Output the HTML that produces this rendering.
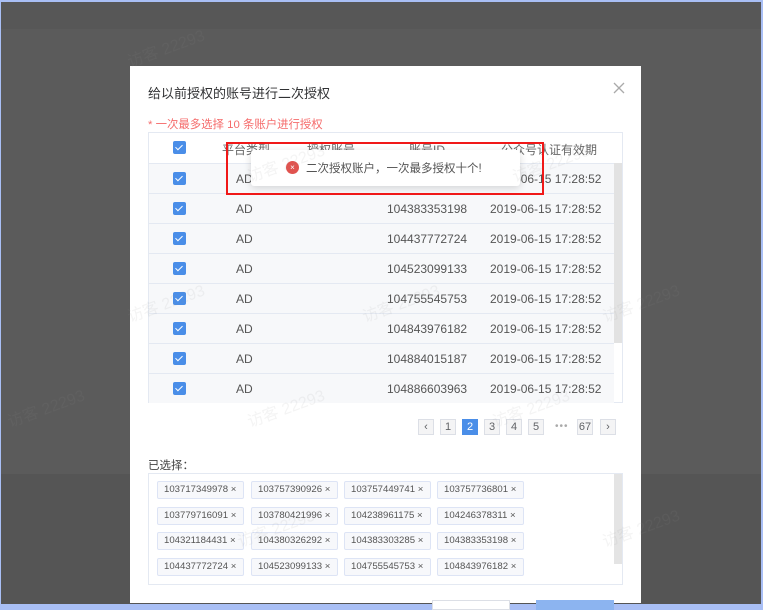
<!DOCTYPE html>
<html><head><meta charset="utf-8"><style>
*{margin:0;padding:0;box-sizing:border-box}
body{width:763px;height:606px;overflow:hidden;background:#a9bff5;font-family:"Liberation Sans","Noto Sans CJK SC",sans-serif;position:relative}
.bg{position:absolute;left:1px;top:2px;width:760px;height:601px;background:#5b5b5b}
.bg .t{position:absolute;left:0;top:0;width:100%;height:27px;background:#575757}
.bg .b{position:absolute;left:0;top:472px;width:100%;height:130px;background:#555}
.m{position:absolute;left:130px;top:66px;width:511px;height:537px;background:#fff}
.a{position:absolute;white-space:nowrap}
.title{left:18px;top:17px;font-size:13px;color:#303133}
.note{left:18px;top:50px;font-size:11.4px;color:#f56c6c}
.tbl{left:18px;top:66px;width:475px;height:271px;border:1px solid #e4e9f2;background:#fff}
.row{position:absolute;left:0;width:465px;height:30px;border-top:1px solid #e4e9f2;background:#f7f8fa;font-size:12px;color:#555}
.cb{position:absolute;left:24px;top:8px;width:13px;height:13px;background:#4a8ee8;border-radius:2px}
.cb:after{content:"";position:absolute;left:4px;top:2px;width:3px;height:6px;border:solid #fff;border-width:0 1.6px 1.6px 0;transform:rotate(45deg)}
.sb{position:absolute;left:465px;top:30px;width:8px;height:180px;background:#e2e2e2}
.pg{position:absolute;top:353px;height:16px;width:16px;border:1px solid #dcdfe6;background:#f4f4f5;font-size:11px;color:#606266;text-align:center;line-height:14px}
.tag{position:absolute;height:18px;width:87px;border:1px solid #dde4f5;background:#f7f8fb;font-size:9.6px;color:#555;line-height:16px;padding-left:6px;border-radius:2px}
.wm{position:absolute;color:rgba(150,150,150,.1);font-size:16px;transform:rotate(-20deg);white-space:nowrap}
</style></head><body>
<div class="bg"><div class="t"></div><div class="b"></div></div>
<div class="m">
<div class="a title">给以前授权的账号进行二次授权</div>
<svg class="a" style="left:483px;top:16px" width="12" height="12"><path d="M1 1L11 11M11 1L1 11" stroke="#aaa" stroke-width="1.3"/></svg>
<div class="a note">* 一次最多选择 10 条账户进行授权</div>
<div class="a tbl">
<div class="row" style="top:0;border-top:none;background:#fff;"><div class="cb"></div><span class="a" style="left:73px;top:8px;color:#666">平台类型</span><span class="a" style="left:158px;top:8px;color:#666">授权账号</span><span class="a" style="left:260px;top:8px;color:#666">账号ID</span><span class="a" style="left:352px;top:8px;color:#666">公众号认证有效期</span></div>
<div class="row" style="top:30px"><div class="cb"></div><span class="a" style="left:87px;top:8px">AD</span><span class="a" style="left:238px;top:8px">104380326292</span><span class="a" style="left:341px;top:8px">2019-06-15 17:28:52</span></div>
<div class="row" style="top:60px"><div class="cb"></div><span class="a" style="left:87px;top:8px">AD</span><span class="a" style="left:238px;top:8px">104383353198</span><span class="a" style="left:341px;top:8px">2019-06-15 17:28:52</span></div>
<div class="row" style="top:90px"><div class="cb"></div><span class="a" style="left:87px;top:8px">AD</span><span class="a" style="left:238px;top:8px">104437772724</span><span class="a" style="left:341px;top:8px">2019-06-15 17:28:52</span></div>
<div class="row" style="top:120px"><div class="cb"></div><span class="a" style="left:87px;top:8px">AD</span><span class="a" style="left:238px;top:8px">104523099133</span><span class="a" style="left:341px;top:8px">2019-06-15 17:28:52</span></div>
<div class="row" style="top:150px"><div class="cb"></div><span class="a" style="left:87px;top:8px">AD</span><span class="a" style="left:238px;top:8px">104755545753</span><span class="a" style="left:341px;top:8px">2019-06-15 17:28:52</span></div>
<div class="row" style="top:180px"><div class="cb"></div><span class="a" style="left:87px;top:8px">AD</span><span class="a" style="left:238px;top:8px">104843976182</span><span class="a" style="left:341px;top:8px">2019-06-15 17:28:52</span></div>
<div class="row" style="top:210px"><div class="cb"></div><span class="a" style="left:87px;top:8px">AD</span><span class="a" style="left:238px;top:8px">104884015187</span><span class="a" style="left:341px;top:8px">2019-06-15 17:28:52</span></div>
<div class="row" style="top:240px"><div class="cb"></div><span class="a" style="left:87px;top:8px">AD</span><span class="a" style="left:238px;top:8px">104886603963</span><span class="a" style="left:341px;top:8px">2019-06-15 17:28:52</span></div>
<div class="sb"></div>
</div>
<div class="pg" style="left:288px">‹</div>
<div class="pg" style="left:310px">1</div>
<div class="pg" style="left:332px;background:#4a8ee8;border-color:#4a8ee8;color:#fff">2</div>
<div class="pg" style="left:354px">3</div>
<div class="pg" style="left:376px">4</div>
<div class="pg" style="left:398px">5</div>
<div class="a" style="left:425px;top:355px;font-size:10px;color:#aaa;letter-spacing:1px">•••</div>
<div class="pg" style="left:447px">67</div>
<div class="pg" style="left:470px">›</div>
<div class="a" style="left:18px;top:391px;font-size:11.5px;color:#444">已选择：</div>
<div class="a" style="left:18px;top:407px;width:475px;height:112px;border:1px solid #e4e9f2">
<div style="position:absolute;left:465px;top:0;width:8px;height:90px;background:#e4e4e4"></div>
<div class="tag" style="left:8px;top:7px">103717349978 ×</div><div class="tag" style="left:102px;top:7px">103757390926 ×</div><div class="tag" style="left:195px;top:7px">103757449741 ×</div><div class="tag" style="left:288px;top:7px">103757736801 ×</div>
<div class="tag" style="left:8px;top:33px">103779716091 ×</div><div class="tag" style="left:102px;top:33px">103780421996 ×</div><div class="tag" style="left:195px;top:33px">104238961175 ×</div><div class="tag" style="left:288px;top:33px">104246378311 ×</div>
<div class="tag" style="left:8px;top:58px">104321184431 ×</div><div class="tag" style="left:102px;top:58px">104380326292 ×</div><div class="tag" style="left:195px;top:58px">104383303285 ×</div><div class="tag" style="left:288px;top:58px">104383353198 ×</div>
<div class="tag" style="left:8px;top:84px">104437772724 ×</div><div class="tag" style="left:102px;top:84px">104523099133 ×</div><div class="tag" style="left:195px;top:84px">104755545753 ×</div><div class="tag" style="left:288px;top:84px">104843976182 ×</div>
</div>
<div class="a" style="left:302px;top:534px;width:78px;height:10px;border:1px solid #dcdfe6;background:#fff"></div>
<div class="a" style="left:406px;top:534px;width:78px;height:10px;background:#8cb4f0"></div>
</div>
<div class="a" style="left:251px;top:150px;width:269px;height:36px;background:#fff;box-shadow:0 2px 8px rgba(0,0,0,.15);border-radius:3px">
<div class="a" style="left:35px;top:11px;width:13px;height:13px;border-radius:50%;background:#e0534f;color:#fff;font-size:8px;text-align:center;line-height:13px">×</div>
<div class="a" style="left:55px;top:10px;font-size:11.5px;color:#555">二次授权账户，一次最多授权十个!</div>
</div>
<div class="a" style="left:226px;top:142px;width:318px;height:53px;border:2px solid #f01818"></div>
<div class="wm" style="left:125px;top:35px">访客 22293</div>
<div class="wm" style="left:245px;top:150px">访客 22293</div>
<div class="wm" style="left:510px;top:150px">访客 22293</div>
<div class="wm" style="left:125px;top:290px">访客 22293</div>
<div class="wm" style="left:360px;top:290px">访客 22293</div>
<div class="wm" style="left:600px;top:290px">访客 22293</div>
<div class="wm" style="left:5px;top:395px">访客 22293</div>
<div class="wm" style="left:245px;top:395px">访客 22293</div>
<div class="wm" style="left:490px;top:395px">访客 22293</div>
<div class="wm" style="left:235px;top:515px">访客 22293</div>
<div class="wm" style="left:600px;top:515px">访客 22293</div>
</body></html>
